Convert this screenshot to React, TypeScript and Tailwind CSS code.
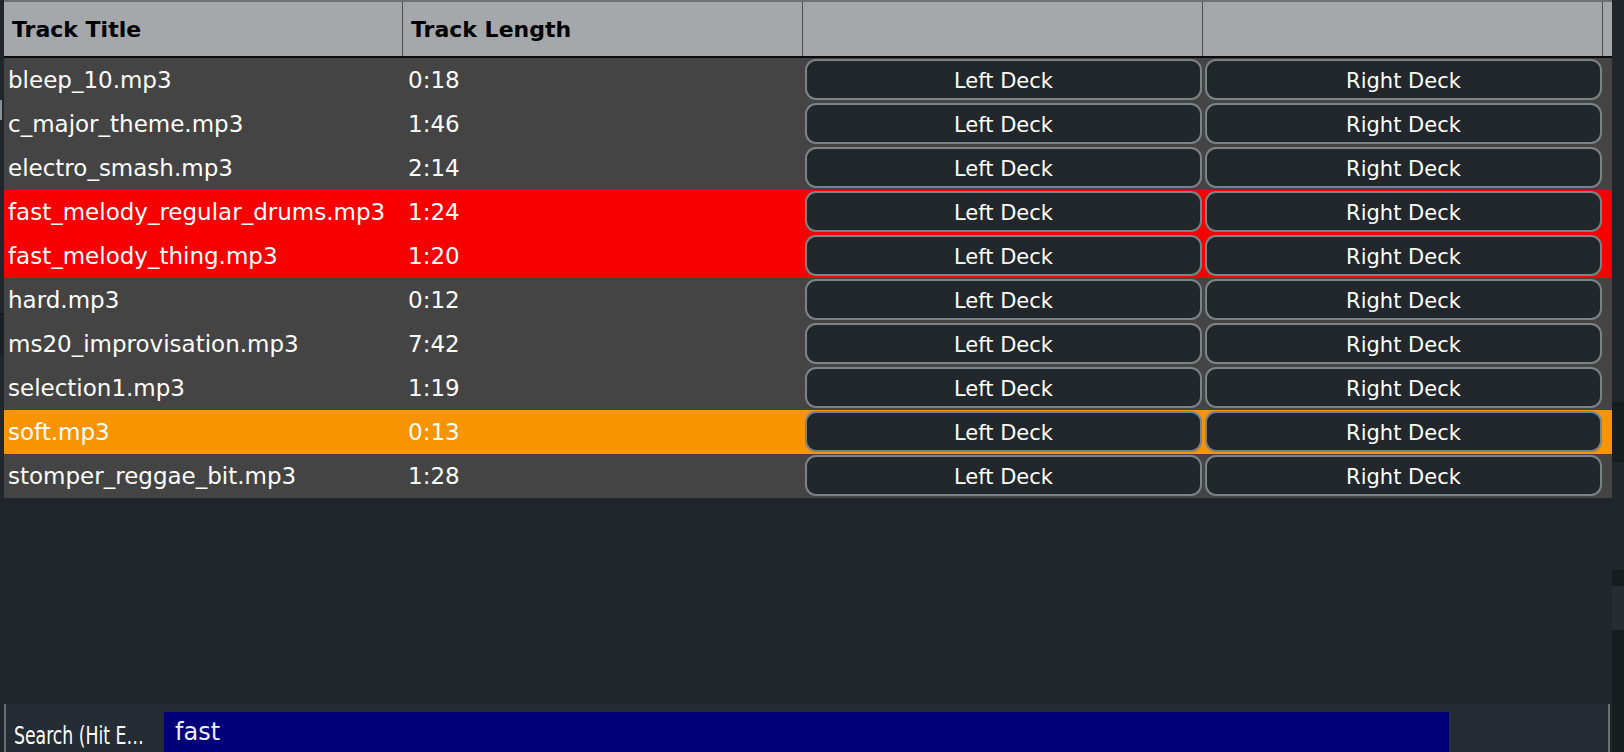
import React from "react";

type Row = { title: string; len: string; bg: string };

const rows: Row[] = [
  { title: "bleep_10.mp3", len: "0:18", bg: "bg-[#444444]" },
  { title: "c_major_theme.mp3", len: "1:46", bg: "bg-[#444444]" },
  { title: "electro_smash.mp3", len: "2:14", bg: "bg-[#444444]" },
  { title: "fast_melody_regular_drums.mp3", len: "1:24", bg: "bg-[#f60000]" },
  { title: "fast_melody_thing.mp3", len: "1:20", bg: "bg-[#f60000]" },
  { title: "hard.mp3", len: "0:12", bg: "bg-[#444444]" },
  { title: "ms20_improvisation.mp3", len: "7:42", bg: "bg-[#444444]" },
  { title: "selection1.mp3", len: "1:19", bg: "bg-[#444444]" },
  { title: "soft.mp3", len: "0:13", bg: "bg-[#f79400]" },
  { title: "stomper_reggae_bit.mp3", len: "1:28", bg: "bg-[#444444]" },
];

function DeckButton({ label }: { label: string }) {
  return (
    <div className="w-[400px] h-full flex pl-[2px] pr-[1px] pt-[1px] pb-[2px]">
      <button className="flex-1 h-full rounded-[11px] border-2 border-[#7c8386] bg-[#21272b] text-white text-[21px] flex items-center justify-center leading-none pt-[3px]">
        {label}
      </button>
    </div>
  );
}

export default function App() {
  return (
    <div
      className="w-[1624px] h-[752px] overflow-hidden bg-[#20262c] flex"
      style={{ fontFamily: '"DejaVu Sans", "Noto Sans", sans-serif' }}
    >
      {/* left strip */}
      <div className="w-[4px] flex flex-col shrink-0">
        <div className="h-[100px] bg-[#20262c]" />
        <div className="h-[20px] flex">
          <div className="w-[2px] bg-[#8a9095]" />
          <div className="flex-1 bg-[#20262c]" />
        </div>
        <div className="h-[193px] bg-[#20262c]" />
        <div className="h-[2px] bg-[#14181b]" />
        <div className="h-[42px] bg-[#1b2024]" />
        <div className="flex-1 bg-[#20262c]" />
      </div>

      {/* main */}
      <div className="w-[1608px] flex flex-col shrink-0">
        <div className="h-[2px] bg-[#6e7174]" />
        {/* header */}
        <div className="h-[56px] bg-[#a4a8ab] border-b-2 border-[#0c0c0c] flex text-black font-bold text-[22px]">
          <div className="w-[399px] border-r border-[#4e5154] flex items-center pl-[8px] pt-[1px]">
            Track Title
          </div>
          <div className="w-[400px] border-r border-[#4e5154] flex items-center pl-[8px] pt-[1px]">
            Track Length
          </div>
          <div className="w-[400px] border-r border-[#4e5154]" />
          <div className="w-[400px] border-r border-[#4e5154]" />
          <div className="flex-1" />
        </div>
        {/* rows */}
        <div className="flex flex-col">
          {rows.map((r) => (
            <div key={r.title} className={`h-[44px] flex ${r.bg} text-white text-[23px]`}>
              <div className="w-[399px] flex items-center pl-[4px] pt-[1px] whitespace-nowrap">{r.title}</div>
              <div className="w-[400px] flex items-center pl-[5px] pt-[1px]">{r.len}</div>
              <DeckButton label="Left Deck" />
              <DeckButton label="Right Deck" />
              <div className="flex-1" />
            </div>
          ))}
        </div>
        <div className="flex-1 bg-[#20262c]" />
        {/* search bar */}
        <div className="h-[48px] bg-[#262c33] border-l-2 border-r-2 border-[#6a6f73] mr-[2px] flex">
          <div className="w-[158px] flex items-end pb-[4px] pl-[8px] overflow-hidden">
            <span
              className="inline-block origin-left scale-x-[0.8] whitespace-nowrap text-[24px] text-white leading-none"
              style={{ fontFamily: '"DejaVu Sans Condensed", "DejaVu Sans", sans-serif' }}
            >
              Search (Hit E…
            </span>
          </div>
          <div className="flex flex-col w-[1285px]">
            <div className="h-[8px]" />
            <div className="flex-1 bg-[#000078] flex items-center pl-[11px] text-[24px] text-[#eeeeff] leading-none">
              fast
            </div>
          </div>
          <div className="flex-1" />
        </div>
      </div>

      {/* right strip */}
      <div className="flex-1 flex flex-col">
        <div className="h-[402px] bg-[#20262c]" />
        <div className="h-[60px] bg-[#171c1f]" />
        <div className="h-[108px] bg-[#20272d]" />
        <div className="h-[16px] bg-[#171c1f]" />
        <div className="h-[44px] bg-[#262c32]" />
        <div className="flex-1 bg-[#171c1f]" />
      </div>
    </div>
  );
}
